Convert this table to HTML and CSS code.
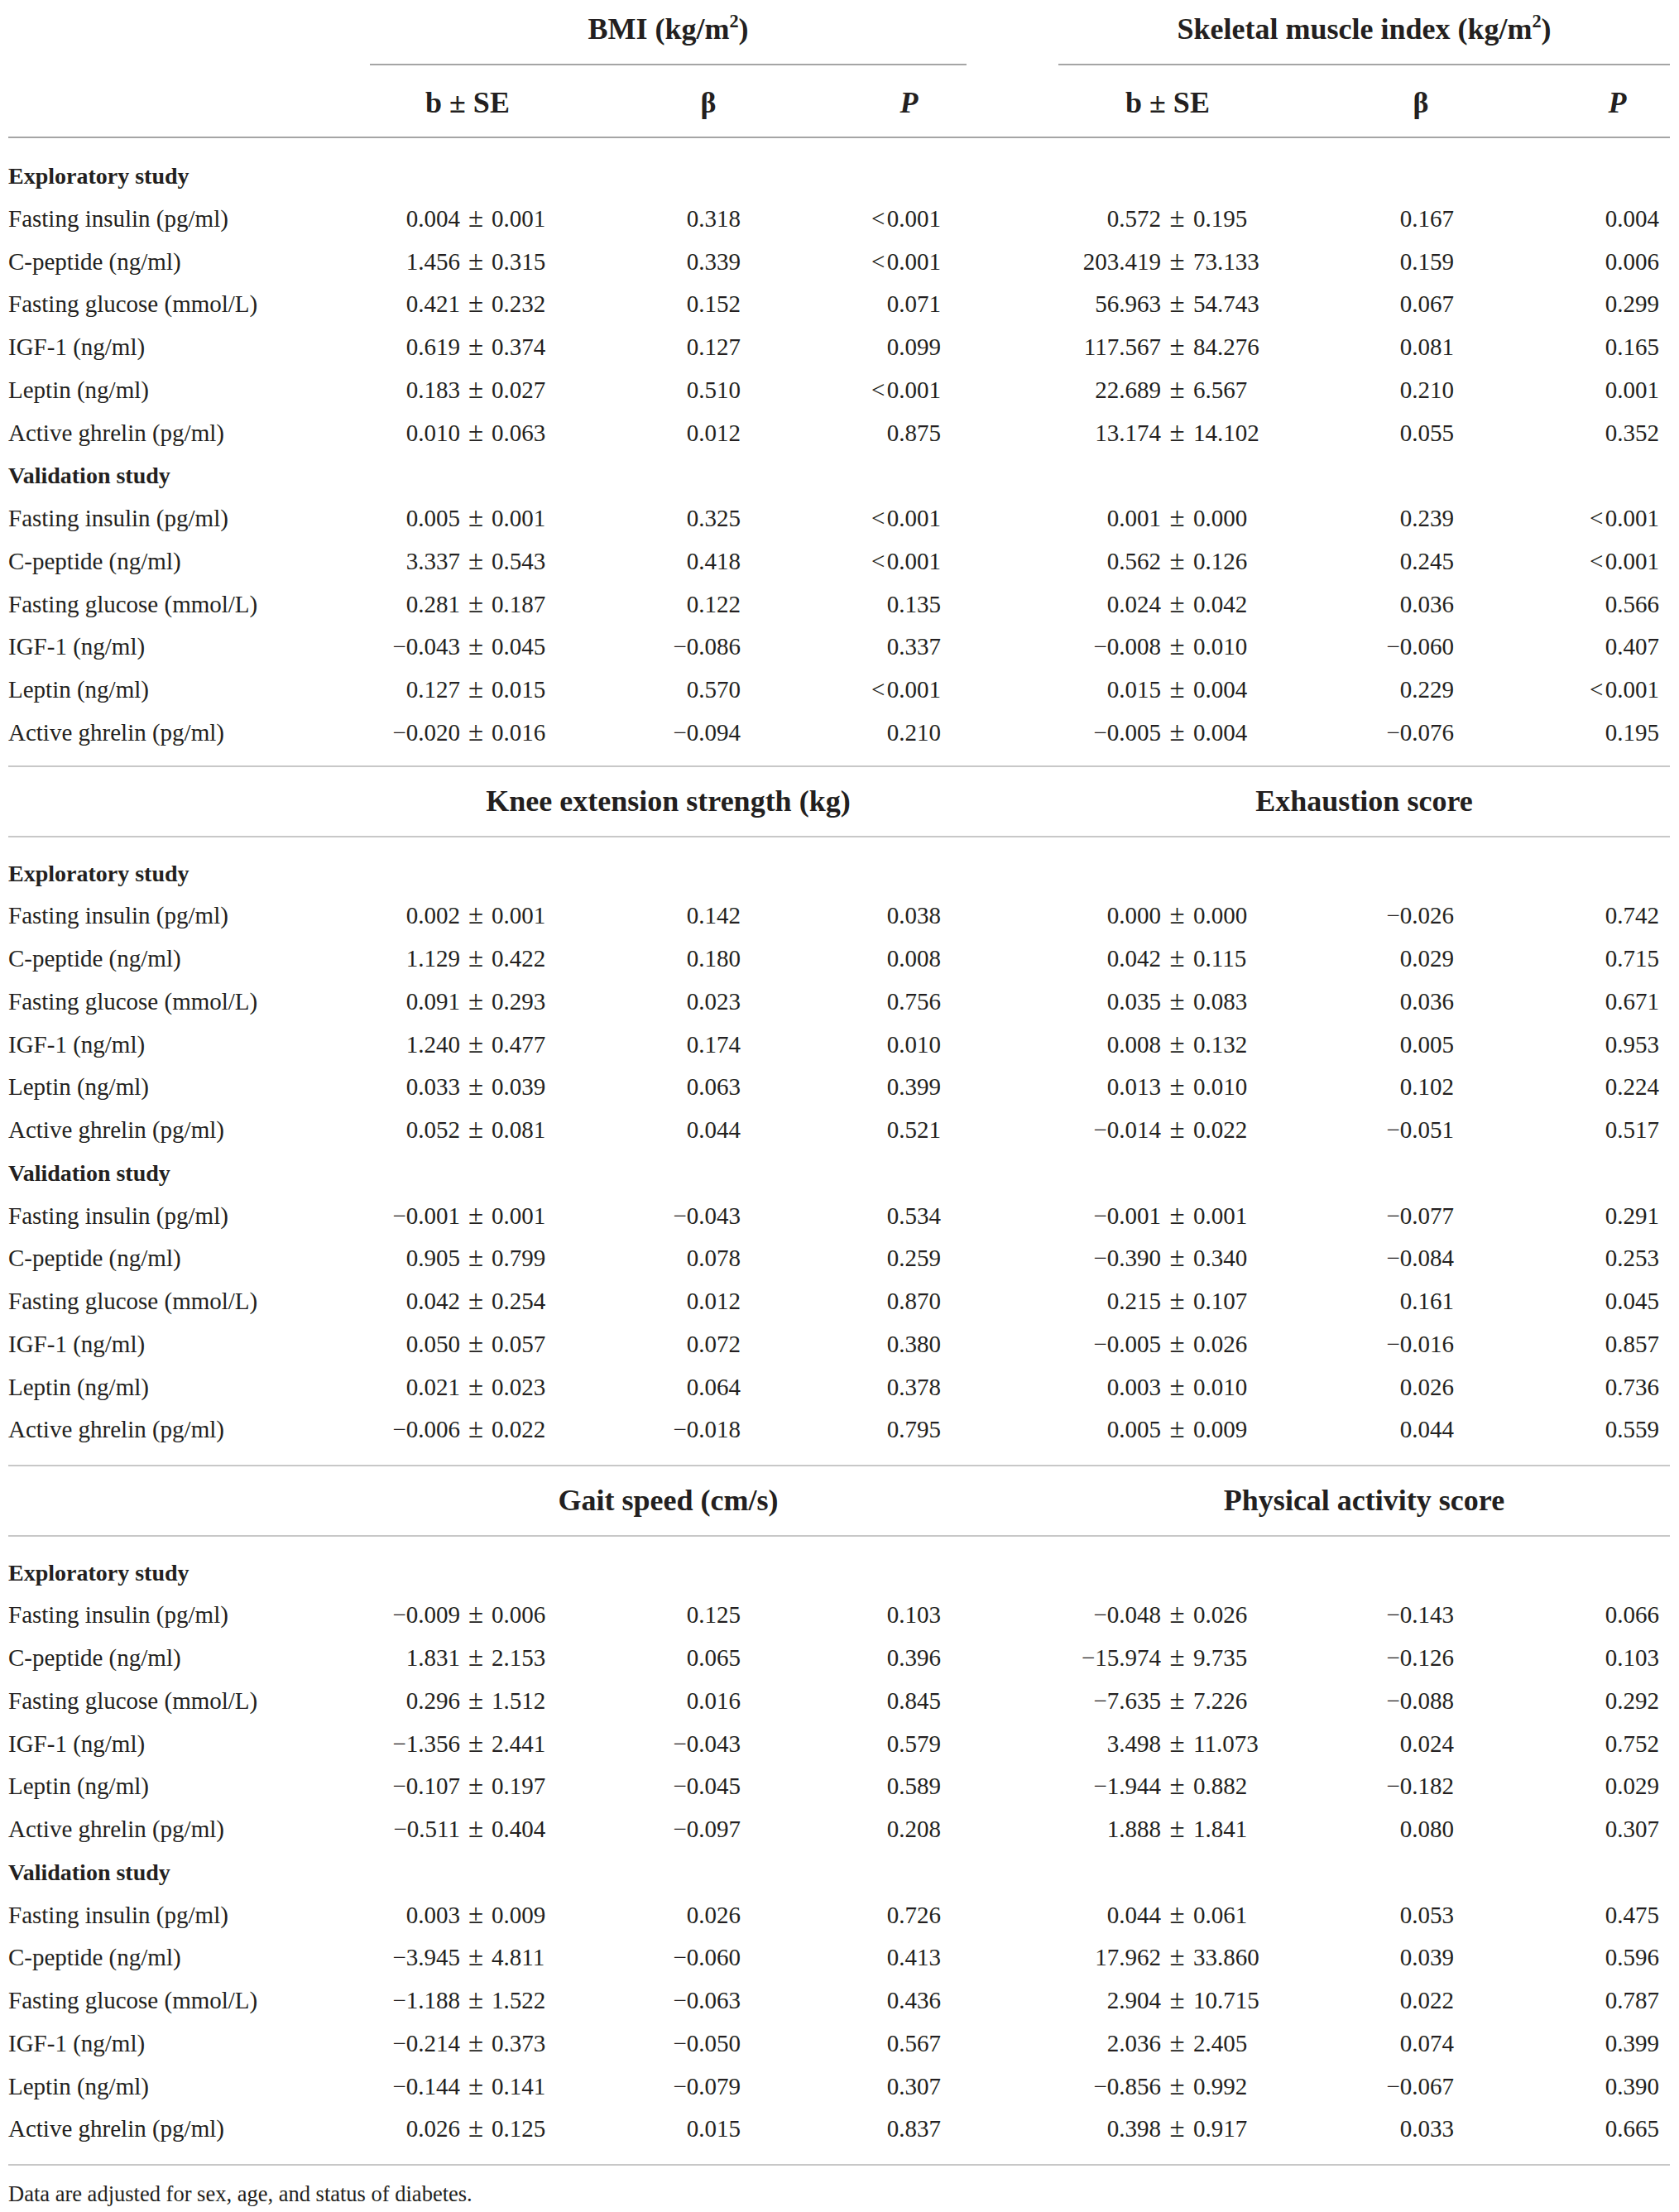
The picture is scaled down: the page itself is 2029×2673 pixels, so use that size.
FILE: index.html
```html
<!DOCTYPE html>
<html lang="en">
<head>
<meta charset="utf-8">
<title>Table</title>
<link rel="stylesheet" href="styles.css">
</head>
<body>
<div class="tbl">
  <div class="grid groups">
    <div class="g1">BMI (kg/m<sup>2</sup>)</div>
    <div class="g2">Skeletal muscle index (kg/m<sup>2</sup>)</div>
  </div>
  <div class="grid colhead">
    <div class="h1">b ± SE</div><div>β</div><div><i>P</i></div>
    <div class="h4">b ± SE</div><div>β</div><div><i>P</i></div>
  </div>
  <div class="body first">
    <div class="grid row"><div class="lab sec">Exploratory study</div></div>
    <div class="grid row"><div class="lab">Fasting insulin (pg/ml)</div><div class="c1"><span class="a">0.004</span><span class="pm">±</span>0.001</div><div class="c2">0.318</div><div class="c3">&lt;&#8202;0.001</div><div class="c4"><span class="a">0.572</span><span class="pm">±</span>0.195</div><div class="c5">0.167</div><div class="c6">0.004</div></div>
    <div class="grid row"><div class="lab">C-peptide (ng/ml)</div><div class="c1"><span class="a">1.456</span><span class="pm">±</span>0.315</div><div class="c2">0.339</div><div class="c3">&lt;&#8202;0.001</div><div class="c4"><span class="a">203.419</span><span class="pm">±</span>73.133</div><div class="c5">0.159</div><div class="c6">0.006</div></div>
    <div class="grid row"><div class="lab">Fasting glucose (mmol/L)</div><div class="c1"><span class="a">0.421</span><span class="pm">±</span>0.232</div><div class="c2">0.152</div><div class="c3">0.071</div><div class="c4"><span class="a">56.963</span><span class="pm">±</span>54.743</div><div class="c5">0.067</div><div class="c6">0.299</div></div>
    <div class="grid row"><div class="lab">IGF-1 (ng/ml)</div><div class="c1"><span class="a">0.619</span><span class="pm">±</span>0.374</div><div class="c2">0.127</div><div class="c3">0.099</div><div class="c4"><span class="a">117.567</span><span class="pm">±</span>84.276</div><div class="c5">0.081</div><div class="c6">0.165</div></div>
    <div class="grid row"><div class="lab">Leptin (ng/ml)</div><div class="c1"><span class="a">0.183</span><span class="pm">±</span>0.027</div><div class="c2">0.510</div><div class="c3">&lt;&#8202;0.001</div><div class="c4"><span class="a">22.689</span><span class="pm">±</span>6.567</div><div class="c5">0.210</div><div class="c6">0.001</div></div>
    <div class="grid row"><div class="lab">Active ghrelin (pg/ml)</div><div class="c1"><span class="a">0.010</span><span class="pm">±</span>0.063</div><div class="c2">0.012</div><div class="c3">0.875</div><div class="c4"><span class="a">13.174</span><span class="pm">±</span>14.102</div><div class="c5">0.055</div><div class="c6">0.352</div></div>
    <div class="grid row"><div class="lab sec">Validation study</div></div>
    <div class="grid row"><div class="lab">Fasting insulin (pg/ml)</div><div class="c1"><span class="a">0.005</span><span class="pm">±</span>0.001</div><div class="c2">0.325</div><div class="c3">&lt;&#8202;0.001</div><div class="c4"><span class="a">0.001</span><span class="pm">±</span>0.000</div><div class="c5">0.239</div><div class="c6">&lt;&#8202;0.001</div></div>
    <div class="grid row"><div class="lab">C-peptide (ng/ml)</div><div class="c1"><span class="a">3.337</span><span class="pm">±</span>0.543</div><div class="c2">0.418</div><div class="c3">&lt;&#8202;0.001</div><div class="c4"><span class="a">0.562</span><span class="pm">±</span>0.126</div><div class="c5">0.245</div><div class="c6">&lt;&#8202;0.001</div></div>
    <div class="grid row"><div class="lab">Fasting glucose (mmol/L)</div><div class="c1"><span class="a">0.281</span><span class="pm">±</span>0.187</div><div class="c2">0.122</div><div class="c3">0.135</div><div class="c4"><span class="a">0.024</span><span class="pm">±</span>0.042</div><div class="c5">0.036</div><div class="c6">0.566</div></div>
    <div class="grid row"><div class="lab">IGF-1 (ng/ml)</div><div class="c1"><span class="a">−0.043</span><span class="pm">±</span>0.045</div><div class="c2">−0.086</div><div class="c3">0.337</div><div class="c4"><span class="a">−0.008</span><span class="pm">±</span>0.010</div><div class="c5">−0.060</div><div class="c6">0.407</div></div>
    <div class="grid row"><div class="lab">Leptin (ng/ml)</div><div class="c1"><span class="a">0.127</span><span class="pm">±</span>0.015</div><div class="c2">0.570</div><div class="c3">&lt;&#8202;0.001</div><div class="c4"><span class="a">0.015</span><span class="pm">±</span>0.004</div><div class="c5">0.229</div><div class="c6">&lt;&#8202;0.001</div></div>
    <div class="grid row"><div class="lab">Active ghrelin (pg/ml)</div><div class="c1"><span class="a">−0.020</span><span class="pm">±</span>0.016</div><div class="c2">−0.094</div><div class="c3">0.210</div><div class="c4"><span class="a">−0.005</span><span class="pm">±</span>0.004</div><div class="c5">−0.076</div><div class="c6">0.195</div></div>
  </div>

  <div class="grid sechead">
    <div class="g1">Knee extension strength (kg)</div>
    <div class="g2">Exhaustion score</div>
  </div>
  <div class="body">
    <div class="grid row"><div class="lab sec">Exploratory study</div></div>
    <div class="grid row"><div class="lab">Fasting insulin (pg/ml)</div><div class="c1"><span class="a">0.002</span><span class="pm">±</span>0.001</div><div class="c2">0.142</div><div class="c3">0.038</div><div class="c4"><span class="a">0.000</span><span class="pm">±</span>0.000</div><div class="c5">−0.026</div><div class="c6">0.742</div></div>
    <div class="grid row"><div class="lab">C-peptide (ng/ml)</div><div class="c1"><span class="a">1.129</span><span class="pm">±</span>0.422</div><div class="c2">0.180</div><div class="c3">0.008</div><div class="c4"><span class="a">0.042</span><span class="pm">±</span>0.115</div><div class="c5">0.029</div><div class="c6">0.715</div></div>
    <div class="grid row"><div class="lab">Fasting glucose (mmol/L)</div><div class="c1"><span class="a">0.091</span><span class="pm">±</span>0.293</div><div class="c2">0.023</div><div class="c3">0.756</div><div class="c4"><span class="a">0.035</span><span class="pm">±</span>0.083</div><div class="c5">0.036</div><div class="c6">0.671</div></div>
    <div class="grid row"><div class="lab">IGF-1 (ng/ml)</div><div class="c1"><span class="a">1.240</span><span class="pm">±</span>0.477</div><div class="c2">0.174</div><div class="c3">0.010</div><div class="c4"><span class="a">0.008</span><span class="pm">±</span>0.132</div><div class="c5">0.005</div><div class="c6">0.953</div></div>
    <div class="grid row"><div class="lab">Leptin (ng/ml)</div><div class="c1"><span class="a">0.033</span><span class="pm">±</span>0.039</div><div class="c2">0.063</div><div class="c3">0.399</div><div class="c4"><span class="a">0.013</span><span class="pm">±</span>0.010</div><div class="c5">0.102</div><div class="c6">0.224</div></div>
    <div class="grid row"><div class="lab">Active ghrelin (pg/ml)</div><div class="c1"><span class="a">0.052</span><span class="pm">±</span>0.081</div><div class="c2">0.044</div><div class="c3">0.521</div><div class="c4"><span class="a">−0.014</span><span class="pm">±</span>0.022</div><div class="c5">−0.051</div><div class="c6">0.517</div></div>
    <div class="grid row"><div class="lab sec">Validation study</div></div>
    <div class="grid row"><div class="lab">Fasting insulin (pg/ml)</div><div class="c1"><span class="a">−0.001</span><span class="pm">±</span>0.001</div><div class="c2">−0.043</div><div class="c3">0.534</div><div class="c4"><span class="a">−0.001</span><span class="pm">±</span>0.001</div><div class="c5">−0.077</div><div class="c6">0.291</div></div>
    <div class="grid row"><div class="lab">C-peptide (ng/ml)</div><div class="c1"><span class="a">0.905</span><span class="pm">±</span>0.799</div><div class="c2">0.078</div><div class="c3">0.259</div><div class="c4"><span class="a">−0.390</span><span class="pm">±</span>0.340</div><div class="c5">−0.084</div><div class="c6">0.253</div></div>
    <div class="grid row"><div class="lab">Fasting glucose (mmol/L)</div><div class="c1"><span class="a">0.042</span><span class="pm">±</span>0.254</div><div class="c2">0.012</div><div class="c3">0.870</div><div class="c4"><span class="a">0.215</span><span class="pm">±</span>0.107</div><div class="c5">0.161</div><div class="c6">0.045</div></div>
    <div class="grid row"><div class="lab">IGF-1 (ng/ml)</div><div class="c1"><span class="a">0.050</span><span class="pm">±</span>0.057</div><div class="c2">0.072</div><div class="c3">0.380</div><div class="c4"><span class="a">−0.005</span><span class="pm">±</span>0.026</div><div class="c5">−0.016</div><div class="c6">0.857</div></div>
    <div class="grid row"><div class="lab">Leptin (ng/ml)</div><div class="c1"><span class="a">0.021</span><span class="pm">±</span>0.023</div><div class="c2">0.064</div><div class="c3">0.378</div><div class="c4"><span class="a">0.003</span><span class="pm">±</span>0.010</div><div class="c5">0.026</div><div class="c6">0.736</div></div>
    <div class="grid row"><div class="lab">Active ghrelin (pg/ml)</div><div class="c1"><span class="a">−0.006</span><span class="pm">±</span>0.022</div><div class="c2">−0.018</div><div class="c3">0.795</div><div class="c4"><span class="a">0.005</span><span class="pm">±</span>0.009</div><div class="c5">0.044</div><div class="c6">0.559</div></div>
  </div>

  <div class="grid sechead">
    <div class="g1">Gait speed (cm/s)</div>
    <div class="g2">Physical activity score</div>
  </div>
  <div class="body">
    <div class="grid row"><div class="lab sec">Exploratory study</div></div>
    <div class="grid row"><div class="lab">Fasting insulin (pg/ml)</div><div class="c1"><span class="a">−0.009</span><span class="pm">±</span>0.006</div><div class="c2">0.125</div><div class="c3">0.103</div><div class="c4"><span class="a">−0.048</span><span class="pm">±</span>0.026</div><div class="c5">−0.143</div><div class="c6">0.066</div></div>
    <div class="grid row"><div class="lab">C-peptide (ng/ml)</div><div class="c1"><span class="a">1.831</span><span class="pm">±</span>2.153</div><div class="c2">0.065</div><div class="c3">0.396</div><div class="c4"><span class="a">−15.974</span><span class="pm">±</span>9.735</div><div class="c5">−0.126</div><div class="c6">0.103</div></div>
    <div class="grid row"><div class="lab">Fasting glucose (mmol/L)</div><div class="c1"><span class="a">0.296</span><span class="pm">±</span>1.512</div><div class="c2">0.016</div><div class="c3">0.845</div><div class="c4"><span class="a">−7.635</span><span class="pm">±</span>7.226</div><div class="c5">−0.088</div><div class="c6">0.292</div></div>
    <div class="grid row"><div class="lab">IGF-1 (ng/ml)</div><div class="c1"><span class="a">−1.356</span><span class="pm">±</span>2.441</div><div class="c2">−0.043</div><div class="c3">0.579</div><div class="c4"><span class="a">3.498</span><span class="pm">±</span>11.073</div><div class="c5">0.024</div><div class="c6">0.752</div></div>
    <div class="grid row"><div class="lab">Leptin (ng/ml)</div><div class="c1"><span class="a">−0.107</span><span class="pm">±</span>0.197</div><div class="c2">−0.045</div><div class="c3">0.589</div><div class="c4"><span class="a">−1.944</span><span class="pm">±</span>0.882</div><div class="c5">−0.182</div><div class="c6">0.029</div></div>
    <div class="grid row"><div class="lab">Active ghrelin (pg/ml)</div><div class="c1"><span class="a">−0.511</span><span class="pm">±</span>0.404</div><div class="c2">−0.097</div><div class="c3">0.208</div><div class="c4"><span class="a">1.888</span><span class="pm">±</span>1.841</div><div class="c5">0.080</div><div class="c6">0.307</div></div>
    <div class="grid row"><div class="lab sec">Validation study</div></div>
    <div class="grid row"><div class="lab">Fasting insulin (pg/ml)</div><div class="c1"><span class="a">0.003</span><span class="pm">±</span>0.009</div><div class="c2">0.026</div><div class="c3">0.726</div><div class="c4"><span class="a">0.044</span><span class="pm">±</span>0.061</div><div class="c5">0.053</div><div class="c6">0.475</div></div>
    <div class="grid row"><div class="lab">C-peptide (ng/ml)</div><div class="c1"><span class="a">−3.945</span><span class="pm">±</span>4.811</div><div class="c2">−0.060</div><div class="c3">0.413</div><div class="c4"><span class="a">17.962</span><span class="pm">±</span>33.860</div><div class="c5">0.039</div><div class="c6">0.596</div></div>
    <div class="grid row"><div class="lab">Fasting glucose (mmol/L)</div><div class="c1"><span class="a">−1.188</span><span class="pm">±</span>1.522</div><div class="c2">−0.063</div><div class="c3">0.436</div><div class="c4"><span class="a">2.904</span><span class="pm">±</span>10.715</div><div class="c5">0.022</div><div class="c6">0.787</div></div>
    <div class="grid row"><div class="lab">IGF-1 (ng/ml)</div><div class="c1"><span class="a">−0.214</span><span class="pm">±</span>0.373</div><div class="c2">−0.050</div><div class="c3">0.567</div><div class="c4"><span class="a">2.036</span><span class="pm">±</span>2.405</div><div class="c5">0.074</div><div class="c6">0.399</div></div>
    <div class="grid row"><div class="lab">Leptin (ng/ml)</div><div class="c1"><span class="a">−0.144</span><span class="pm">±</span>0.141</div><div class="c2">−0.079</div><div class="c3">0.307</div><div class="c4"><span class="a">−0.856</span><span class="pm">±</span>0.992</div><div class="c5">−0.067</div><div class="c6">0.390</div></div>
    <div class="grid row"><div class="lab">Active ghrelin (pg/ml)</div><div class="c1"><span class="a">0.026</span><span class="pm">±</span>0.125</div><div class="c2">0.015</div><div class="c3">0.837</div><div class="c4"><span class="a">0.398</span><span class="pm">±</span>0.917</div><div class="c5">0.033</div><div class="c6">0.665</div></div>
  </div>
  <p class="note">Data are adjusted for sex, age, and status of diabetes.</p>
</div>
</body>
</html>
```

FILE: styles.css
```css
html, body {
  margin: 0;
  padding: 0;
  background: #ffffff;
}

body {
  color: #231f20;
  font-family: "Liberation Serif", "Times New Roman", serif;
}

.tbl {
  margin-left: 10px;
  width: 2008px;
}

.grid {
  display: grid;
  grid-template-columns: 437px 236px 346px 139px 111px 264px 348px 127px;
}

/* top group header */
.groups .g1,
.groups .g2 {
  font-size: 36px;
  font-weight: 700;
  line-height: 40px;
  text-align: center;
  padding-top: 14.5px;
  padding-bottom: 22.5px;
  border-bottom: 2px solid #a5a5a5;
  white-space: nowrap;
}

.g1 { grid-column: 2 / 5; }
.g2 { grid-column: 6 / 9; }

sup {
  font-size: 0.62em;
  line-height: 0;
  vertical-align: 0.62em;
}

/* column header row */
.colhead {
  font-size: 36px;
  font-weight: 700;
  line-height: 40px;
  padding-top: 24.5px;
  padding-bottom: 21.5px;
  border-bottom: 2px solid #a5a5a5;
  text-align: center;
}

.colhead .h1 { grid-column: 2; }
.colhead .h4 { grid-column: 6; }

/* section header rows (Knee..., Gait...) */
.sechead {
  font-size: 36px;
  font-weight: 700;
  line-height: 40px;
  padding-top: 21px;
  padding-bottom: 22.5px;
  border-bottom: 2px solid #c8c8c8;
}

.sechead .g1,
.sechead .g2 {
  text-align: center;
  white-space: nowrap;
}

/* body */
.body {
  padding-top: 17.5px;
  padding-bottom: 15.5px;
  border-bottom: 2px solid #c8c8c8;
}

.body.first {
  padding-top: 20px;
  padding-bottom: 13px;
}

.row {
  height: 51.75px;
  line-height: 51.75px;
  font-size: 29px;
  white-space: nowrap;
}

.lab {
  grid-column: 1;
}

.sec {
  grid-column: 1 / 5;
  font-size: 28px;
  font-weight: 700;
}

.c1 { grid-column: 2; }
.c2 { grid-column: 3; text-align: right; padding-right: 134px; }
.c3 { grid-column: 4; text-align: right; padding-right: 31px; }
.c4 { grid-column: 6; }
.c5 { grid-column: 7; text-align: right; padding-right: 134px; }
.c6 { grid-column: 8; text-align: right; padding-right: 13px; }

.a {
  display: inline-block;
  text-align: right;
}

.pm {
  display: inline-block;
  text-align: center;
  font-size: 33px;
  line-height: 30px;
}

.c1 .a { width: 109px; }
.c1 .pm { width: 38px; }
.c4 .a { width: 124px; }
.c4 .pm { width: 39px; }

.note {
  margin: 18px 0 0 0;
  font-size: 26.5px;
  line-height: 32px;
}
```
